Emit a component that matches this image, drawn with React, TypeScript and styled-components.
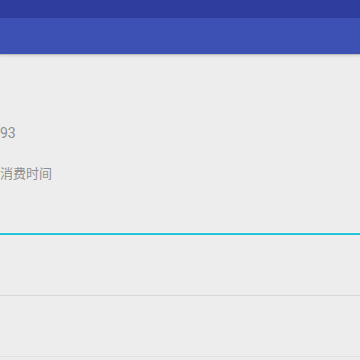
import styled, { createGlobalStyle } from 'styled-components'

const GlobalStyle = createGlobalStyle`
  html, body {
    margin: 0;
    padding: 0;
    background: #EDEDED;
    font-family: Roboto, "Noto Sans CJK SC", sans-serif;
    overflow: hidden;
  }
`

const Screen = styled.div`
  width: 360px;
  height: 360px;
  display: flex;
  flex-direction: column;
  background: #EDEDED;
  overflow: hidden;
`

const StatusBar = styled.div`
  height: 18px;
  background: #2F3E9E;
`

const Toolbar = styled.div`
  height: 36px;
  background: #3D51B4;
  box-shadow: 0 1px 0 #BDBDBD, 0 2px 3px rgba(0, 0, 0, 0.12);
  position: relative;
  z-index: 1;
`

const Form = styled.div`
  display: flex;
  flex-direction: column;
  padding-top: 69px;
`

const Value = styled.div`
  font-size: 14px;
  line-height: 20px;
  color: #8E8E8E;
`

const Label = styled.div`
  margin-top: 20px;
  font-family: "Noto Sans CJK SC", sans-serif;
  font-size: 13px;
  line-height: 20px;
  color: #8E8E8E;
`

const Input = styled.div`
  height: 49px;
  border-bottom: 1px solid #F4F4F4;
`

const Underline = styled.div`
  height: 2px;
  background: #26C4DA;
`

const Row = styled.div<{ $height: number; $line: string }>`
  height: ${p => p.$height}px;
  border-bottom: 1px solid ${p => p.$line};
`

export default function App() {
  return (
    <>
      <GlobalStyle />
      <Screen>
        <StatusBar />
        <Toolbar />
        <Form>
          <Value>93</Value>
          <Label>消费时间</Label>
          <Input />
          <Underline />
          <Row $height={60} $line="#D8D8D8" />
          <Row $height={60} $line="#E0E0E0" />
        </Form>
      </Screen>
    </>
  )
}
